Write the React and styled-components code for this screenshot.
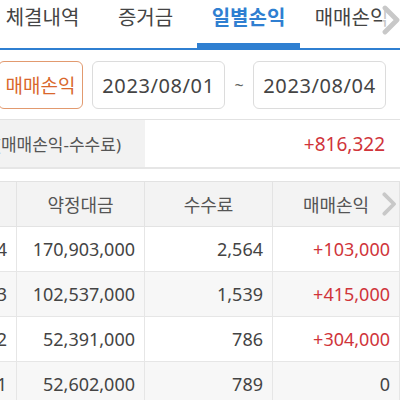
import styled, { createGlobalStyle } from "styled-components"

const Global = createGlobalStyle`
  html, body { margin: 0; padding: 0; background: #fff; }
  body { width: 400px; height: 400px; overflow: hidden; font-family: "Noto Sans", "Noto Sans CJK KR", sans-serif; color: #444; }
`

const TABS = ["체결내역", "증거금", "일별손익", "매매손익"]
const ROWS = [
  { date: "2023/08/04", amount: "170,903,000", fee: "2,564", pl: "+103,000" },
  { date: "2023/08/03", amount: "102,537,000", fee: "1,539", pl: "+415,000" },
  { date: "2023/08/02", amount: "52,391,000", fee: "786", pl: "+304,000" },
  { date: "2023/08/01", amount: "52,602,000", fee: "789", pl: "0" },
]

function Chevron({ size }) {
  return (
    <svg width={size * 0.6} height={size} viewBox="0 0 12 20">
      <path d="M2 2 L10 10 L2 18" fill="none" stroke="#c8c8c8" strokeWidth="3.2" strokeLinecap="round" strokeLinejoin="round" />
    </svg>
  )
}

export default function App() {
  return (
    <Page>
      <Global />
      <TabBar>
        <TabTrack>
          {TABS.map((t, i) => (
            <Tab key={t} active={i === 2}>{t}</Tab>
          ))}
        </TabTrack>
        <TabMore><Chevron size={30} /></TabMore>
      </TabBar>
      <Filter>
        <SelectBtn>매매손익</SelectBtn>
        <DateBox>2023/08/01</DateBox>
        <Tilde>~</Tilde>
        <DateBox>2023/08/04</DateBox>
      </Filter>
      <Summary>
        <SummaryLabel>총손익(매매손익-수수료)</SummaryLabel>
        <SummaryValue>+816,322</SummaryValue>
      </Summary>
      <Table>
        <Grid>
          <Head />
          <Head>약정대금</Head>
          <Head>수수료</Head>
          <Head>매매손익</Head>
          {ROWS.map((r, i) => (
            <Row key={r.date} alt={i % 2 === 1}>
              <Cell>{r.date}</Cell>
              <Cell>{r.amount}</Cell>
              <Cell>{r.fee}</Cell>
              <Cell red={r.pl.startsWith("+")}>{r.pl}</Cell>
            </Row>
          ))}
        </Grid>
        <HeadMore><Chevron size={24} /></HeadMore>
      </Table>
    </Page>
  )
}

const Page = styled.div`
  width: 400px;
  height: 400px;
  overflow: hidden;
`

const TabBar = styled.div`
  position: relative;
  height: 50px;
  border-bottom: 2px solid #2f7fd1;
  box-sizing: border-box;
  overflow: hidden;
`

const TabTrack = styled.div`
  display: flex;
  margin-left: -9px;
  height: 100%;
`

const Tab = styled.div`
  flex: 0 0 103px;
  display: flex;
  justify-content: center;
  padding-top: 2px;
  font-size: 20px;
  color: ${p => (p.active ? "#2f7fd1" : "#444")};
  font-weight: ${p => (p.active ? 700 : 400)};
  box-sizing: border-box;
  border-bottom: ${p => (p.active ? "5px solid #2f7fd1" : "none")};
  white-space: nowrap;
`

const TabMore = styled.div`
  position: absolute;
  right: 0;
  top: 4px;
  width: 18px;
  height: 32px;
  display: flex;
  align-items: center;
  justify-content: center;
  background: rgba(255, 255, 255, 0.7);
`

const Filter = styled.div`
  display: flex;
  align-items: center;
  height: 70px;
  border-bottom: 1px solid #e2e2e2;
  box-sizing: border-box;
  padding-top: 1px;
`

const SelectBtn = styled.div`
  margin-left: -2px;
  width: 85px;
  height: 48px;
  box-sizing: border-box;
  border: 1px solid #e29a6f;
  border-radius: 6px;
  display: flex;
  align-items: center;
  justify-content: center;
  color: #d9672c;
  font-size: 19px;
  white-space: nowrap;
`

const DateBox = styled.div`
  width: 133px;
  height: 48px;
  box-sizing: border-box;
  border: 1px solid #dcdcdc;
  border-radius: 6px;
  display: flex;
  align-items: center;
  justify-content: center;
  font-size: 20px;
  letter-spacing: 0.6px;
  color: #444;
  &:nth-child(2) { margin-left: 9px; }
`

const Tilde = styled.div`
  width: 28px;
  text-align: center;
  color: #666;
  font-size: 16px;
`

const Summary = styled.div`
  display: flex;
  height: 47px;
  border-bottom: 2px solid #e6e6e6;
`

const SummaryLabel = styled.div`
  width: 145px;
  flex: none;
  background: #f2f2f2;
  display: flex;
  align-items: center;
  justify-content: flex-end;
  padding-right: 24px;
  box-sizing: border-box;
  overflow: hidden;
  white-space: nowrap;
  font-size: 17px;
  color: #555;
`

const SummaryValue = styled.div`
  flex: 1;
  display: flex;
  align-items: center;
  justify-content: flex-end;
  padding-right: 15px;
  font-size: 19px;
  color: #d0343a;
`

const Table = styled.div`
  position: relative;
  margin-top: 12px;
  border-top: 1px solid #e2e2e2;
  overflow: hidden;
`

const Grid = styled.div`
  display: grid;
  grid-template-columns: 110px 128px 128px 127px;
  margin-left: -93px;
`

const Head = styled.div`
  height: 44px;
  background: #f3f3f3;
  border-right: 1px solid #e3e3e3;
  border-bottom: 1px solid #e3e3e3;
  display: flex;
  align-items: center;
  justify-content: center;
  font-size: 18px;
  color: #555;
`

const Row = styled.div`
  display: contents;
  & > div { background: ${p => (p.alt ? "#f7f7f7" : "#fff")}; }
`

const Cell = styled.div`
  height: 44px;
  border-right: 1px solid #e6e6e6;
  border-bottom: 1px solid #e6e6e6;
  display: flex;
  align-items: center;
  justify-content: flex-end;
  padding-right: 9px;
  font-size: 18px;
  color: ${p => (p.red ? "#d0343a" : "#444")};
`

const HeadMore = styled.div`
  position: absolute;
  right: 4px;
  top: 10px;
  height: 24px;
  display: flex;
  align-items: center;
`
